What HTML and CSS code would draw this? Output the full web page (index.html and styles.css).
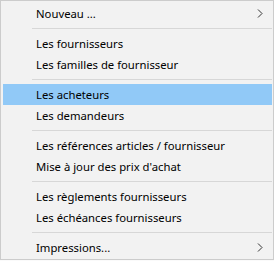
FILE: index.html
```html
<!DOCTYPE html>
<html lang="fr">
<head>
    <meta charset="UTF-8">
    <title>Menu fournisseurs</title>
    <link rel="stylesheet" href="styles.css">
</head>
<body>
    <div class="menu">
        <div class="item has-sub">
            <span>Nouveau ...</span>
            <svg class="chevron" width="6" height="9" viewBox="0 0 6 9"><path d="M1 0.5 L5 4.5 L1 8.5" fill="none" stroke="#333" stroke-width="1"/></svg>
        </div>
        <div class="sep"></div>
        <div class="item">Les fournisseurs</div>
        <div class="item">Les familles de fournisseur</div>
        <div class="sep"></div>
        <div class="item active">Les acheteurs</div>
        <div class="item">Les demandeurs</div>
        <div class="sep"></div>
        <div class="item">Les références articles / fournisseur</div>
        <div class="item">Mise à jour des prix d'achat</div>
        <div class="sep"></div>
        <div class="item">Les règlements fournisseurs</div>
        <div class="item">Les échéances fournisseurs</div>
        <div class="sep"></div>
        <div class="item has-sub">
            <span>Impressions...</span>
            <svg class="chevron" width="6" height="9" viewBox="0 0 6 9"><path d="M1 0.5 L5 4.5 L1 8.5" fill="none" stroke="#333" stroke-width="1"/></svg>
        </div>
    </div>
</body>
</html>
```

FILE: styles.css
```css
body {
    margin: 0;
    background: #fafafa;
    font-family: "Noto Sans", "Open Sans", sans-serif;
    font-size: 11.3px;
}
.menu {
    width: 269px;
    height: 256px;
    padding: 2px 1px 0 2px;
    border: 1px solid #cccccc;
    background: #f2f2f2;
    box-shadow: 1px 1px 0 #e4e4e4;
}
.item {
    height: 21px;
    line-height: 21px;
    padding-left: 33px;
    color: #000;
    white-space: nowrap;
    display: flex;
    align-items: center;
}
.item.active {
    background: #91c9f7;
}
.has-sub {
    justify-content: space-between;
    padding-right: 9px;
}
.chevron {
    display: block;
}
.sep {
    height: 1px;
    margin: 4px 0 4px 29px;
    background: #d7d7d7;
}
```
